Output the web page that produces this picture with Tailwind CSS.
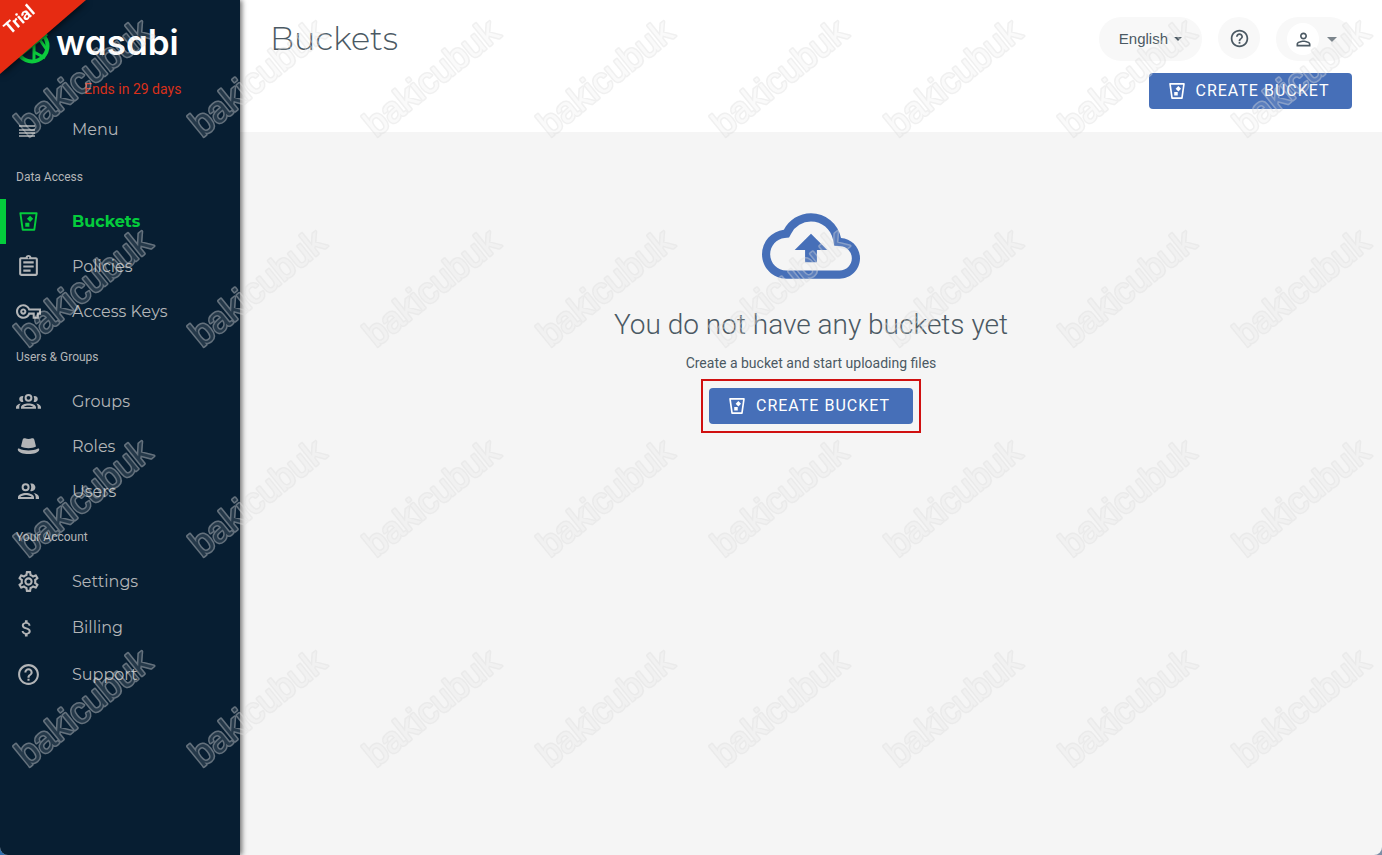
<!DOCTYPE html>
<html lang="en">
<head>
<meta charset="utf-8">
<meta name="viewport" content="width=device-width, initial-scale=1">
<title>Buckets</title>
<script src="https://cdn.jsdelivr.net/npm/@tailwindcss/browser@4"></script>
</head>
<body class="bg-linear-to-r from-[#2f6fae] to-[#7c8ea6] font-[Roboto,sans-serif] text-[#4b5963]">
<svg class="hidden" aria-hidden="true">
  <symbol id="bucket" viewBox="0 0 24 24">
    <path d="M2.700 2.500h18.600L18.600 21.500H5.400z" fill="none" stroke="currentColor" stroke-width="2.200" stroke-linejoin="round"/>
    <path d="M13.800 5.300l3.600 3.600-3.600 3.600-3.600-3.600zM8.300 13.300h4.700v4.700H8.300z" fill="currentColor"/>
  </symbol>
  <symbol id="help" viewBox="0 0 24 24"><path fill="currentColor" d="M11 18h2v-2h-2v2zm1-16C6.48 2 2 6.48 2 12s4.480 10 10 10 10-4.480 10-10S17.520 2 12 2zm0 18c-4.410 0-8-3.590-8-8s3.590-8 8-8 8 3.590 8 8-3.590 8-8 8zm0-14c-2.210 0-4 1.790-4 4h2c0-1.100.9-2 2-2s2 .9 2 2c0 2-3 1.750-3 5h2c0-2.250 3-2.500 3-5 0-2.210-1.790-4-4-4z"/></symbol>
</svg>
<div class="flex min-h-screen overflow-hidden rounded-b-lg bg-[#f5f5f5]">
  <aside class="relative z-10 w-60 shrink-0 bg-[#071e32] text-[#b3b5b7] shadow-[2px_0_5px_rgba(0,0,0,0.55)]">
    <div class="flex h-[107px] flex-col">
      <a href="#" class="flex h-[75px] items-center pt-2 pl-[14px]" aria-label="Wasabi">
        <svg class="mt-2 size-9" viewBox="0 0 36 36" fill="none" stroke="#0ccb3d" stroke-width="4"><circle cx="18" cy="18" r="15.500"/><path d="M20 16L33 6M20 16v17M20 16L5 28M20 24l11 6M26 12l7 10M12 22L4 15" stroke-width="3"/></svg>
        <span class="ml-1.5 font-[Inter,sans-serif] text-[35px] leading-10 font-semibold text-white [font-feature-settings:'cv11']">wasabi</span>
      </a>
      <p class="pl-[84px] text-sm leading-7 text-[#d9301a]">Ends in 29 days</p>
    </div>
    <svg class="absolute top-0 left-0 h-20 w-24 drop-shadow-[1px_2px_3px_rgba(0,0,0,0.6)]" viewBox="0 0 96 80"><path d="M0 0h86L0 74z" fill="#e62b12"/><text x="10" y="35" transform="rotate(-41 10 35)" fill="#fff" font-family="Roboto" font-weight="700" font-size="17">Trial</text></svg>
    <nav class="font-[Montserrat,Inter,sans-serif] text-base">
      <button type="button" class="flex h-[45px] w-full items-center gap-[31px] pl-4 text-left">
        <svg class="size-[25px]" viewBox="0 0 25 25"><path d="M3 9h16M3 13h16M3 16h16M3 19h16" stroke="currentColor" stroke-width="1.500"/></svg>Menu</button>
      <h2 class="mt-0.5 flex h-[45px] items-center pl-4 font-[Roboto,sans-serif] text-xs">Data Access</h2>
      <a href="#" aria-current="page" class="flex h-[45px] items-center gap-[31px] border-l-6 border-[#04cc3c] pl-2.5 font-bold text-[#04cc3c]"><svg class="size-[25px] p-0.5"><use href="#bucket"/></svg>Buckets</a>
      <a href="#" class="flex h-[45px] items-center gap-[31px] pl-4"><svg class="size-[25px]" viewBox="0 0 24 24" fill="currentColor"><path d="M7 15h7v2H7zm0-4h10v2H7zm0-4h10v2H7zm12-4h-4.180C14.400 1.840 13.300 1 12 1c-1.300 0-2.400.84-2.820 2H5c-.14 0-.27.01-.4.04-.39.08-.74.28-1.010.55-.18.18-.33.4-.43.64-.1.230-.16.49-.16.77v14c0 .27.06.54.16.78s.25.45.43.64c.27.27.62.47 1.010.55.13.02.26.03.4.03h14c1.100 0 2-.9 2-2V5c0-1.100-.9-2-2-2zm-7-.25c.41 0 .75.34.75.75s-.34.75-.75.75-.75-.34-.75-.75.34-.75.75-.75zM19 19H5V5h14v14z"/></svg>Policies</a>
      <a href="#" class="flex h-[45px] items-center gap-[31px] pl-4"><svg class="size-[25px]" viewBox="0 0 24 24" fill="currentColor"><path d="M22 19h-6v-4h-2.680c-1.140 2.420-3.600 4-6.320 4-3.860 0-7-3.140-7-7s3.140-7 7-7c2.720 0 5.170 1.580 6.320 4H24v6h-2v4zm-4-2h2v-4h2v-2H11.940l-.23-.67C11.010 8.340 9.110 7 7 7c-2.760 0-5 2.240-5 5s2.240 5 5 5c2.110 0 4.010-1.340 4.710-3.330l.23-.67H18v4zM7 15c-1.650 0-3-1.350-3-3s1.350-3 3-3 3 1.350 3 3-1.350 3-3 3zm0-4c-.55 0-1 .45-1 1s.45 1 1 1 1-.45 1-1-.45-1-1-1z"/></svg>Access Keys</a>
      <h2 class="flex h-[45px] items-center pl-4 font-[Roboto,sans-serif] text-xs">Users &amp; Groups</h2>
      <a href="#" class="flex h-[45px] items-center gap-[31px] pl-4"><svg class="size-[25px]" viewBox="0 0 25 25" fill="currentColor"><circle cx="12.500" cy="8.800" r="2.900" fill="none" stroke="currentColor" stroke-width="2"/><path fill-rule="evenodd" d="M5 19.800v-1.500c0-2.400 3.800-3.800 7.500-3.800s7.500 1.400 7.500 3.800v1.500zm2.700-1.900h9.600c-.8-.9-2.700-1.500-4.800-1.500s-4 .6-4.800 1.500z"/><path d="M7.400 7.300a3 3 0 1 0 0 5.500 6 6 0 0 1 0-5.500zM17.600 7.300a3 3 0 1 1 0 5.500 6 6 0 0 0 0-5.500zM4.800 14.600C2 15.200 0 16.500 0 18.300v1.500h3.300v-1.900c0-1.300.6-2.400 1.500-3.300zM20.200 14.600c2.800.6 4.800 1.900 4.800 3.700v1.500h-3.300v-1.900c0-1.300-.6-2.400-1.500-3.300z"/></svg>Groups</a>
      <a href="#" class="flex h-[45px] items-center gap-[31px] pl-4"><svg class="size-[25px]" viewBox="0 0 25 25" fill="currentColor"><path d="M5 12.500 6.600 6c.3-1.500 1.200-2.100 2.500-1.700 1.200.4 2.200.7 3.400.7s2.200-.3 3.400-.7c1.300-.4 2.200.2 2.500 1.700l1.600 6.500c-2 1.200-4.600 1.700-7.500 1.700S7 13.700 5 12.500zM3 14.600c2.900 1.400 6.200 1.900 9.500 1.900s6.600-.5 9.500-1.900c.8-.4 1.300.1 1.200 1.100-.3 2.800-5.200 4.400-10.700 4.400S2.100 18.500 1.800 15.700c-.1-1 .4-1.500 1.200-1.100z"/></svg>Roles</a>
      <a href="#" class="flex h-[45px] items-center gap-[31px] pl-4"><svg class="size-[25px]" viewBox="0 0 25 25" fill="currentColor"><circle cx="9.600" cy="8.300" r="3" fill="none" stroke="currentColor" stroke-width="2"/><path d="M14.200 4.600c3-.9 5.200 1.200 5.200 3.700s-2.200 4.600-5.200 3.700c1.400-2.400 1.400-5 0-7.400zM17.400 14c3 .6 5.600 2 5.600 4.300V20h-3.300v-1.900c0-1.700-.9-3.100-2.300-4.100z"/><path fill-rule="evenodd" d="M2 20v-1.800c0-2.500 4-4.200 8-4.200s8 1.700 8 4.200V20zm2.300-2h11.400c-.7-1-3.300-2-5.700-2s-5 1-5.700 2z"/></svg>Users</a>
      <h2 class="flex h-[45px] items-center pl-4 font-[Roboto,sans-serif] text-xs">Your Account</h2>
      <a href="#" class="flex h-[45px] items-center gap-[31px] pl-4"><svg class="size-[25px]" viewBox="0 0 24 24" fill="currentColor"><path d="M19.430 12.980c.04-.32.07-.64.07-.98 0-.34-.03-.66-.07-.98l2.110-1.650c.19-.15.24-.42.12-.64l-2-3.460c-.09-.16-.26-.25-.44-.25-.06 0-.12.01-.17.03l-2.490 1c-.52-.4-1.080-.73-1.690-.98l-.38-2.650C14.460 2.180 14.250 2 14 2h-4c-.25 0-.46.18-.49.42l-.38 2.650c-.61.25-1.170.59-1.690.98l-2.490-1c-.06-.02-.12-.03-.18-.03-.17 0-.34.09-.43.25l-2 3.460c-.13.22-.07.49.12.64l2.110 1.650c-.04.32-.07.65-.07.98 0 .33.03.66.07.98l-2.110 1.650c-.19.15-.24.42-.12.64l2 3.460c.09.16.26.25.44.25.06 0 .12-.01.17-.03l2.490-1c.52.4 1.080.73 1.690.98l.38 2.650c.03.24.24.42.49.42h4c.25 0 .46-.18.49-.42l.38-2.650c.61-.25 1.170-.59 1.690-.98l2.490 1c.06.02.12.03.18.03.17 0 .34-.09.43-.25l2-3.460c.12-.22.07-.49-.12-.64l-2.110-1.650zm-1.980-1.710c.04.31.05.52.05.73 0 .21-.02.43-.05.73l-.14 1.130.89.7 1.080.84-.7 1.210-1.270-.51-1.040-.42-.9.68c-.43.32-.84.56-1.250.73l-1.060.43-.16 1.130-.2 1.350h-1.400l-.19-1.350-.16-1.130-1.060-.43c-.43-.18-.83-.41-1.230-.71l-.91-.7-1.060.43-1.270.51-.7-1.210 1.080-.84.89-.7-.14-1.130c-.03-.31-.05-.54-.05-.74s.02-.43.05-.73l.14-1.130-.89-.7-1.080-.84.7-1.210 1.270.51 1.040.42.9-.68c.43-.32.84-.56 1.250-.73l1.060-.43.16-1.130.2-1.350h1.390l.19 1.350.16 1.130 1.060.43c.43.18.83.41 1.230.71l.91.7 1.060-.43 1.270-.51.7 1.210-1.070.85-.89.7.14 1.130zM12 8c-2.210 0-4 1.790-4 4s1.790 4 4 4 4-1.790 4-4-1.790-4-4-4zm0 6c-1.100 0-2-.9-2-2s.9-2 2-2 2 .9 2 2-.9 2-2 2z"/></svg>Settings</a>
      <a href="#" class="flex h-[47px] items-center gap-[31px] pl-4"><svg class="size-[25px]" viewBox="0 -3 28 28" fill="currentColor"><path d="M11.800 10.900c-2.270-.59-3-1.200-3-2.150 0-1.090 1.010-1.850 2.700-1.850 1.780 0 2.440.85 2.500 2.100h2.210c-.07-1.720-1.120-3.300-3.210-3.810V3h-3v2.160c-1.940.42-3.500 1.680-3.500 3.610 0 2.310 1.910 3.460 4.700 4.130 2.500.6 3 1.480 3 2.410 0 .69-.49 1.790-2.700 1.790-2.060 0-2.870-.92-2.980-2.100h-2.200c.12 2.190 1.760 3.420 3.680 3.830V21h3v-2.150c1.950-.37 3.500-1.500 3.500-3.550 0-2.840-2.430-3.810-4.700-4.400z"/></svg>Billing</a>
      <a href="#" class="flex h-[47px] items-center gap-[31px] pl-4"><svg class="size-[25px]"><use href="#help"/></svg>Support</a>
    </nav>
  </aside>

  <div class="flex min-w-0 flex-1 flex-col">
    <header class="flex h-[132px] justify-between bg-white px-[30px]">
      <h1 class="pt-4 font-[Montserrat,Inter,sans-serif] text-[32px] leading-[46px] font-light">Buckets</h1>
      <div class="flex flex-col items-end gap-3 pt-[17px]">
        <div class="flex items-start gap-4">
          <button type="button" class="flex h-11 items-center gap-1.5 rounded-full bg-[#f8f8f8] px-5 font-['Liberation_Sans',sans-serif] text-[15px]">English<svg class="h-1 w-2" viewBox="0 0 8 4"><path d="M0 0h8L4 4z" fill="currentColor"/></svg></button>
          <button type="button" aria-label="Help" class="flex size-[42px] items-center justify-center rounded-full bg-[#f8f8f8]"><svg class="size-[21px]"><use href="#help"/></svg></button>
          <button type="button" aria-label="Account" class="flex h-11 items-center gap-2 rounded-full bg-[#f8f8f8] pr-[15px] pl-[11px]"><span class="flex size-8 items-center justify-center rounded-full bg-white"><svg class="size-[21px]" viewBox="0 0 24 24" fill="currentColor"><path d="M12 5.900c1.160 0 2.100.94 2.100 2.100s-.94 2.100-2.100 2.100S9.900 9.160 9.900 8s.94-2.100 2.100-2.100m0 9c2.970 0 6.100 1.460 6.100 2.100v1.100H5.900V17c0-.64 3.130-2.100 6.100-2.100M12 4C9.790 4 8 5.790 8 8s1.790 4 4 4 4-1.790 4-4-1.790-4-4-4zm0 9c-2.670 0-8 1.340-8 4v3h16v-3c0-2.660-5.330-4-8-4z"/></svg></span><svg class="h-[5px] w-2.5" viewBox="0 0 10 5"><path d="M0 0h10L5 5z" fill="#7c858c"/></svg></button>
        </div>
        <button type="button" class="flex h-9 min-w-[203px] items-center justify-center gap-2.5 rounded bg-[#466fb8] pr-5 pl-4 text-base tracking-[1px] text-white"><svg class="size-[18px]"><use href="#bucket"/></svg>CREATE BUCKET</button>
      </div>
    </header>
    <main class="flex flex-1 flex-col items-center pt-[65px]">
      <svg class="size-[98px]" viewBox="0 0 24 24" fill="#466fb8"><path d="M19.350 10.040A7.490 7.490 0 0 0 12 4C9.110 4 6.600 5.640 5.350 8.040A5.994 5.994 0 0 0 0 14c0 3.310 2.690 6 6 6h13c2.760 0 5-2.240 5-5 0-2.640-2.050-4.780-4.650-4.960zM19 18H6c-2.210 0-4-1.790-4-4 0-2.050 1.530-3.760 3.560-3.970l1.070-.11.5-.95A5.469 5.469 0 0 1 12 6c2.620 0 4.880 1.860 5.390 4.430l.3 1.500 1.530.11A2.980 2.980 0 0 1 22 15c0 1.650-1.350 3-3 3zM8 13h2.550v3h2.900V13H16l-4-4z"/></svg>
      <h2 class="mt-3 text-[28px] leading-9 font-light">You do not have any buckets yet</h2>
      <p class="mt-2.5 text-sm leading-5">Create a bucket and start uploading files</p>
      <div class="mt-1.5 border-2 border-[#d01010] px-1.5 py-[7px]">
        <button type="button" class="flex h-9 min-w-[204px] items-center justify-center gap-2.5 rounded bg-[#466fb8] pr-5 pl-4 text-base tracking-[1px] text-white"><svg class="size-[18px]"><use href="#bucket"/></svg>CREATE BUCKET</button>
      </div>
    </main>
  </div>
</div>
<svg class="pointer-events-none fixed inset-0 z-20 size-full" aria-hidden="true">
  <defs>
    <mask id="ring" maskUnits="userSpaceOnUse" x="0" y="0" width="176" height="210">
      <g font-family="Liberation Sans" font-size="36" stroke-linejoin="round">
        <text x="27" y="138" transform="rotate(-39 27 138)" fill="#fff" stroke="#fff" stroke-width="3">bakicubuk</text>
        <text x="27" y="138" transform="rotate(-39 27 138)" fill="#555">bakicubuk</text>
      </g>
    </mask>
    <pattern id="mark" width="174" height="210" patternUnits="userSpaceOnUse" patternTransform="translate(1 0)">
      <rect width="174" height="210" fill="#dcdddd" fill-opacity=".44" mask="url(#ring)"/>
    </pattern>
  </defs>
  <rect width="100%" height="100%" fill="url(#mark)"/>
</svg>
</body>
</html>
